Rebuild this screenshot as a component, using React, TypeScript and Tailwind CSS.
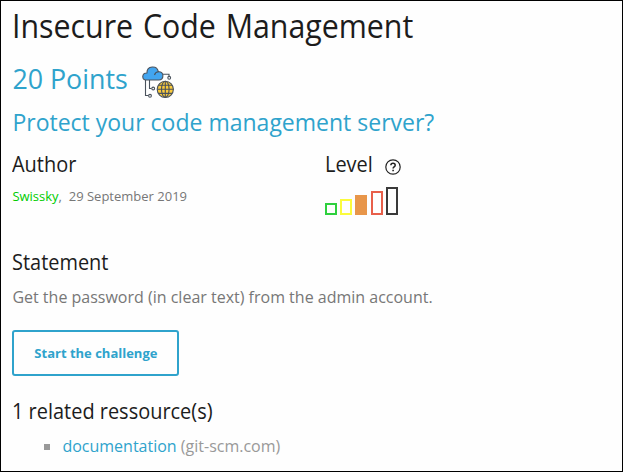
import type { ReactNode } from 'react';

const levels = [
  { id: 1, className: 'h-3 w-3 border-[#2ed03e]' },
  { id: 2, className: 'h-4 w-3 border-[#fbfb3c]' },
  { id: 3, className: 'h-5 w-3 border-[#e8964a] bg-[#e8964a]' },
  { id: 4, className: 'h-6 w-3 border-[#e85f4a]' },
  { id: 5, className: 'h-7 w-3 border-[#3a3a3a]' },
];

function SubTitle({ children, className }: { children: ReactNode; className: string }) {
  return (
    <h3 className={`h-7 origin-left scale-x-95 text-[21px] leading-7 text-[#1c1c1c] whitespace-nowrap ${className}`}>{children}</h3>
  );
}

function CloudIcon() {
  return (
    <svg className="h-8 w-8" viewBox="0 0 32 32" fill="none" stroke="#4a525c" strokeWidth="1.1">
      <path d="M3.5 14v15.5h2.7M7.5 14v8.5h1.9M21 8.3h6v2" />
      <circle cx="8" cy="29.8" r="1.4" />
      <circle cx="11.2" cy="22.5" r="1.4" />
      <circle cx="27.2" cy="11.8" r="1.4" />
      <path d="M4.2 14C-.6 13.6-.3 6.8 4.9 7 5-.6 15-1 16.4 5.8c2.8-.3 4.5 1.4 4.5 4 0 2.5-1.7 4.2-4.1 4.2z" fill="#42a5f0" />
      <path d="M12.5 9c.6-2 2-3.1 3.9-3.2" />
      <circle cx="23.3" cy="23.3" r="8.1" fill="#fbcb3b" />
      <ellipse cx="23.3" cy="23.3" rx="3.8" ry="8.1" />
      <path d="M23.3 15.2v16.2M15.2 23.3h16.2M16.5 19.2h13.6M16.5 27.4h13.6" />
    </svg>
  );
}

function HelpIcon() {
  return (
    <svg className="h-4 w-4" viewBox="0 0 16 16" fill="none" stroke="#222" strokeWidth="1.2">
      <circle cx="8" cy="8" r="7.2" />
      <path d="M5.9 6.3c0-1.3.9-2.1 2.1-2.1s2.2.8 2.2 2c0 1.6-2.1 1.7-2.1 3.2" strokeWidth="1.5" />
      <path d="M8.1 10.7v1.6" strokeWidth="1.6" />
    </svg>
  );
}

export default function App() {
  return (
    <main className="h-[472px] w-[623px] overflow-hidden border border-black bg-[#fefefe] pt-[5px] pl-[11.4px] font-['Open_Sans',sans-serif] text-[#777]">
      <h1 className="h-10 w-fit origin-left scale-x-[0.948] text-[32px] leading-10 text-[#1c1c1c] whitespace-nowrap [word-spacing:2px]">
        Insecure Code Management
      </h1>

      <div className="mt-[15px] flex h-9 items-center gap-3.5">
        <h2 className="text-[26.8px] leading-9 text-[#2fa3cc]">20 Points</h2>
        <span className="mt-1.5"><CloudIcon /></span>
      </div>
      <h2 className="mt-[9px] h-8 text-[23px] leading-8 text-[#2fa3cc] whitespace-nowrap">Protect your code management server?</h2>

      <div className="mt-3 flex">
        <section className="w-[312.6px]">
          <SubTitle className="w-fit">Author</SubTitle>
          <p className="mt-2 text-[13px] leading-5 whitespace-nowrap">
            <a className="text-[#0c0]">Swissky</a>,&nbsp; 29 September 2019
          </p>
        </section>
        <section>
          <div className="flex">
            <SubTitle className="w-[60px]">Level</SubTitle>
            <span className="mt-[9px]"><HelpIcon /></span>
          </div>
          <div className="mt-[9px] flex items-end gap-[3.2px]">
            {levels.map(({ id, className }) => (
              <span key={id} className={`border-2 ${className}`} />
            ))}
          </div>
        </section>
      </div>

      <SubTitle className="mt-[33px] w-fit">Statement</SubTitle>
      <p className="mt-[9px] h-6 text-base leading-6 whitespace-nowrap">Get the password (in clear text) from the admin account.</p>

      <button className="mt-[21px] block h-[46px] w-[167px] rounded-[3px] border-2 border-[#2fa3cc] pt-px text-[13px] font-bold text-[#2fa3cc] whitespace-nowrap">
        Start the challenge
      </button>

      <SubTitle className="mt-[21px] w-fit">1 related ressource(s)</SubTitle>
      <ul className="mt-[9px]">
        <li className="flex h-6 items-center text-base leading-6 whitespace-nowrap text-[#999]">
          <span className="mt-0.5 ml-8 mr-3 size-1.5 bg-[#999]" />
          <span>
            <a className="text-[#2fa3cc]">documentation</a> (git-scm.com)
          </span>
        </li>
      </ul>
    </main>
  );
}
